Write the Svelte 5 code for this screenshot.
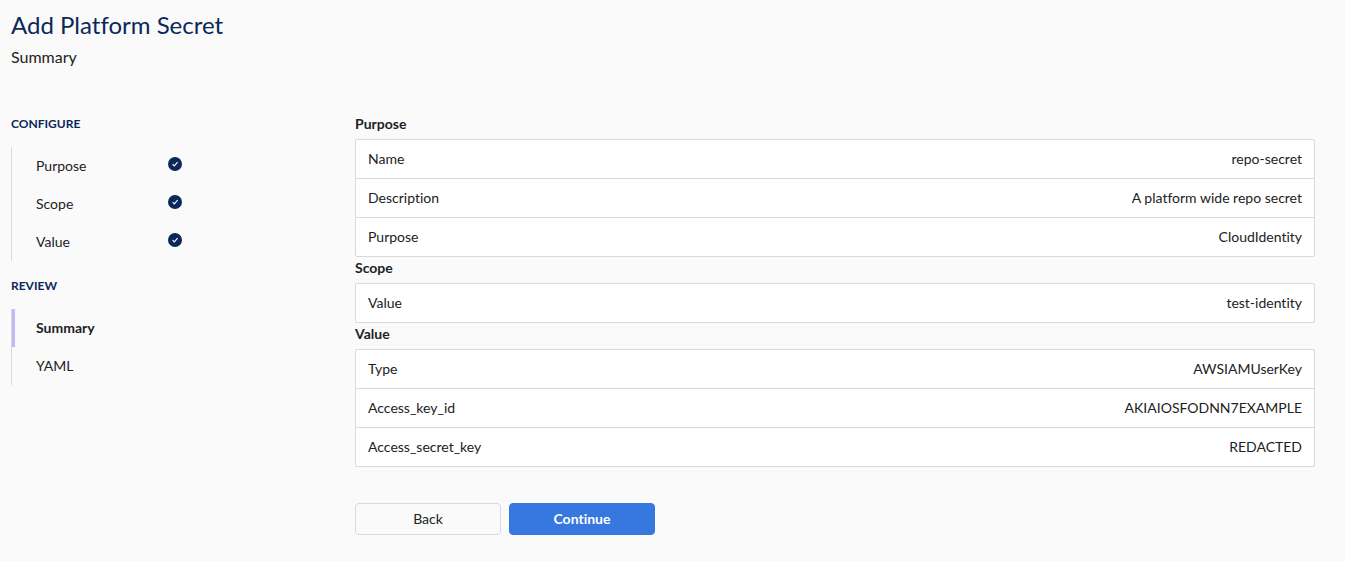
<script lang="ts">
  interface Step {
    label: string;
    done?: boolean;
    active?: boolean;
  }

  interface StepGroup {
    title: string;
    steps: Step[];
  }

  interface Section {
    title: string;
    rows: [string, string][];
  }

  const groups: StepGroup[] = [
    {
      title: 'Configure',
      steps: [
        { label: 'Purpose', done: true },
        { label: 'Scope', done: true },
        { label: 'Value', done: true },
      ],
    },
    {
      title: 'Review',
      steps: [{ label: 'Summary', active: true }, { label: 'YAML' }],
    },
  ];

  const sections: Section[] = [
    {
      title: 'Purpose',
      rows: [
        ['Name', 'repo-secret'],
        ['Description', 'A platform wide repo secret'],
        ['Purpose', 'CloudIdentity'],
      ],
    },
    {
      title: 'Scope',
      rows: [['Value', 'test-identity']],
    },
    {
      title: 'Value',
      rows: [
        ['Type', 'AWSIAMUserKey'],
        ['Access_key_id', 'AKIAIOSFODNN7EXAMPLE'],
        ['Access_secret_key', 'REDACTED'],
      ],
    },
  ];
</script>

<div class="page">
  <header>
    <h1>Add Platform Secret</h1>
    <p class="subtitle">Summary</p>
  </header>

  <div class="wizard">
    <nav class="sidebar">
      {#each groups as group}
        <h2 class="group-title">{group.title}</h2>
        <ul class="steps">
          {#each group.steps as step}
            <li class="step" class:active={step.active}>
              <span>{step.label}</span>
              {#if step.done}
                <svg class="check" viewBox="0 0 14 14" aria-hidden="true">
                  <circle cx="7" cy="7" r="7" fill="#0a2859" />
                  <path d="M4.6 7.2 6.3 8.9 9.6 5.1" fill="none" stroke="#fff" stroke-width="1.1" />
                </svg>
              {/if}
            </li>
          {/each}
        </ul>
      {/each}
    </nav>

    <main>
      {#each sections as section}
        <section>
          <h3>{section.title}</h3>
          <table>
            <tbody>
              {#each section.rows as [name, value]}
                <tr>
                  <th scope="row">{name}</th>
                  <td>{value}</td>
                </tr>
              {/each}
            </tbody>
          </table>
        </section>
      {/each}

      <div class="actions">
        <button type="button">Back</button>
        <button type="button" class="primary">Continue</button>
      </div>
    </main>
  </div>
</div>

<style>
  :global(body) {
    background: #fafafa;
  }

  .page {
    padding: 9px 30px 26px 11px;
    font-family: Lato, 'Liberation Sans', sans-serif;
    font-size: 14px;
    font-variant-ligatures: none;
    line-height: 22px;
    color: #222;
  }

  h1,
  h2,
  h3,
  p,
  ul {
    margin: 0;
  }

  h1 {
    font-size: 24px;
    font-weight: 400;
    line-height: 32px;
    color: #0a2859;
  }

  .subtitle {
    margin-top: 5px;
    font-size: 16px;
  }

  .wizard {
    display: grid;
    grid-template-columns: 344px 1fr;
    margin-top: 45px;
  }

  .group-title {
    font-size: 12px;
    font-weight: 700;
    text-transform: uppercase;
    color: #0a2859;
  }

  .steps {
    margin: 12px 0 14px;
    padding: 0;
    list-style: none;
    border-left: 1px solid #d9d9d9;
  }

  .step {
    display: flex;
    justify-content: space-between;
    box-sizing: border-box;
    width: 170px;
    height: 38px;
    padding: 8px 0 8px 24px;
  }

  .step.active {
    padding-left: 21px;
    border-left: 3px solid #c0b8f8;
    font-weight: 700;
  }

  .check {
    width: 14px;
    height: 14px;
    margin-top: 2px;
  }

  h3 {
    padding-bottom: 4px;
    font-size: 14px;
    font-weight: 700;
  }

  table {
    width: 100%;
    border: 1px solid #d9d9d9;
    border-radius: 2px;
    border-spacing: 0;
    background: #fff;
  }

  th,
  td {
    padding: 8px 12px;
    font-weight: 400;
    text-align: left;
  }

  td {
    text-align: right;
  }

  tr:not(:last-child) > * {
    border-bottom: 1px solid #d9d9d9;
  }

  .actions {
    display: flex;
    gap: 8px;
    margin-top: 36px;
  }

  button {
    width: 146px;
    height: 32px;
    padding: 0;
    border: 1px solid #d9d9d9;
    border-radius: 4px;
    background: #fafafa;
    font: inherit;
    color: inherit;
    cursor: pointer;
  }

  button.primary {
    border-color: #3677e0;
    background: #3677e0;
    font-weight: 700;
    color: #fff;
  }
</style>
